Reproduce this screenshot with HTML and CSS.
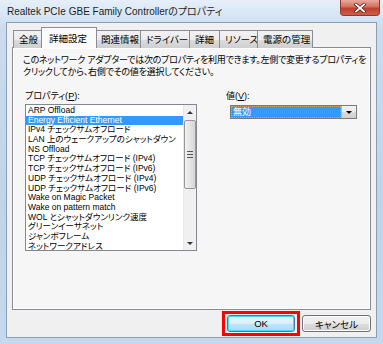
FILE: index.html
```html
<!DOCTYPE html>
<html lang="ja">
<head>
    <meta charset="UTF-8">
    <title>Realtek PCIe GBE Family Controllerのプロパティ</title>
    <link rel="stylesheet" href="styles.css">
</head>
<body>
    <div class="window">
        <div class="titlebar">
            <span class="title">Realtek PCIe GBE Family Controllerのプロパティ</span>
            <span class="close">
                <svg width="14" height="10" viewBox="0 0 14 10">
                    <path d="M3 1.5 L11 8.5 M11 1.5 L3 8.5" stroke="#5a1a14" stroke-width="3.2" stroke-linecap="square"/>
                    <path d="M3 1.5 L11 8.5 M11 1.5 L3 8.5" stroke="#fff" stroke-width="1.8" stroke-linecap="square"/>
                </svg>
            </span>
        </div>

        <div class="client">
            <div class="tabs">
                <span class="tab t1">全般</span>
                <span class="tab active">詳細設定</span>
                <span class="tab t3">関連情報</span>
                <span class="tab t4">ドライバー</span>
                <span class="tab t5">詳細</span>
                <span class="tab t6">リソース</span>
                <span class="tab t7">電源の管理</span>
            </div>

            <div class="panel">
                <p class="desc">このネットワーク アダプターでは次のプロパティを利用できます。左側で変更するプロパティを<br>クリックしてから、右側でその値を選択してください。</p>

                <div class="fields">
                    <div class="col-left">
                        <div class="label">プロパティ(<u>P</u>):</div>
                        <div class="listbox">
                            <ul class="items">
                                <li>ARP Offload</li>
                                <li class="selected">Energy Efficient Ethernet</li>
                                <li>IPv4 チェックサムオフロード</li>
                                <li>LAN 上のウェークアップのシャットダウン</li>
                                <li>NS Offload</li>
                                <li>TCP チェックサムオフロード (IPv4)</li>
                                <li>TCP チェックサムオフロード (IPv6)</li>
                                <li>UDP チェックサムオフロード (IPv4)</li>
                                <li>UDP チェックサムオフロード (IPv6)</li>
                                <li>Wake on Magic Packet</li>
                                <li>Wake on pattern match</li>
                                <li>WOL とシャットダウンリンク速度</li>
                                <li>グリーンイーサネット</li>
                                <li>ジャンボフレーム</li>
                                <li>ネットワークアドレス</li>
                            </ul>
                            <div class="scrollbar">
                                <span class="arrow up"></span>
                                <span class="thumb"><span class="grip"></span></span>
                                <span class="track"></span>
                                <span class="arrow down"></span>
                            </div>
                        </div>
                    </div>

                    <div class="col-right">
                        <div class="label">値(<u>V</u>):</div>
                        <div class="select">
                            <span class="value">無効</span>
                            <span class="drop"></span>
                        </div>
                    </div>
                </div>
            </div>

            <div class="buttons">
                <span class="mark"><button class="btn default">OK</button></span>
                <button class="btn">キャンセル</button>
            </div>
        </div>
    </div>
</body>
</html>
```

FILE: styles.css
```css
* {
    box-sizing: border-box;
}
body {
    margin: 0;
    font-family: "Liberation Sans", "Noto Sans CJK JP", sans-serif;
    font-feature-settings: "palt";
    color: #000;
}
.window {
    width: 383px;
    height: 344px;
    display: flex;
    flex-direction: column;
    background: linear-gradient(#e6eff9, #c9dcf0 30px, #bed4eb 60%, #c5d9ee);
}
.titlebar {
    height: 22px;
    display: flex;
    justify-content: space-between;
    align-items: flex-start;
    padding-left: 7px;
    flex-shrink: 0;
}
.title {
    font-size: 10px;
    line-height: 12px;
    padding-top: 6px;
    color: #1e1e1e;
}
.close {
    width: 40px;
    height: 16px;
    margin-right: 3px;
    display: flex;
    align-items: center;
    justify-content: center;
    background: linear-gradient(#e9a99c, #d0705f 45%, #c23d2d 55%, #cf5e48);
    border: 1px solid #8a3a30;
    border-top: none;
    border-radius: 0 0 4px 4px;
}
.client {
    flex: 1;
    margin: 0 6px 6px;
    border: 1px solid #8d9db2;
    background: #f0f0f0;
    padding: 4px 5px 1px;
    display: flex;
    flex-direction: column;
}

/* tabs */
.tabs {
    display: flex;
    align-items: flex-end;
    height: 21px;
    padding-left: 1px;
    position: relative;
    z-index: 1;
    margin-bottom: -1px;
}
.tab {
    height: 18px;
    font-size: 9.5px;
    line-height: 17px;
    padding: 0 5px;
    border: 1px solid #898c95;
    border-bottom: none;
    margin-right: -1px;
    background: linear-gradient(#f2f2f2, #ebebeb 50%, #dddddd 51%, #cfcfcf);
    white-space: nowrap;
}
.tab.t1 { width: 31px; }
.tab.t3 { width: 46px; }
.tab.t4 { width: 50px; }
.tab.t5 { width: 31px; }
.tab.t6 { width: 39px; }
.tab.t7 { width: 56px; }
.tab.active {
    height: 21px;
    width: 56px;
    margin: 0 -2px 0 -2px;
    padding: 2px 7px 0;
    background: #fbfbfb;
    position: relative;
    z-index: 2;
}

.panel {
    height: 263px;
    border: 1px solid #898c95;
    background: #f6f6f6;
    box-shadow: inset 1px 1px 0 #fff, inset -1px -1px 0 #fff;
    padding: 6px 10px 0 10px;
}
.desc {
    margin: 0;
    font-size: 9px;
    line-height: 12px;
    letter-spacing: -0.25px;
    white-space: nowrap;
}
.fields {
    display: flex;
    margin-top: 12px;
}
.label {
    font-size: 9px;
    line-height: 12px;
    height: 14px;
}
.col-left {
    margin-left: 2px;
    width: 172px;
}
.col-right {
    margin-left: 29px;
}

/* property list */
.listbox {
    height: 147px;
    border: 1px solid #828790;
    background: #fff;
    display: flex;
}
.items {
    list-style: none;
    margin: 0;
    padding: 1px 0 0;
    flex: 1;
    overflow: hidden;
}
.items li {
    font-size: 8.5px;
    line-height: 9.7px;
    height: 9.7px;
    padding-left: 2px;
    white-space: nowrap;
}
.items li.selected {
    background: #3399ff;
    color: #fff;
}
.scrollbar {
    width: 13px;
    display: flex;
    flex-direction: column;
    background: #f0f0f0;
    border-left: 1px solid #e8e8e8;
}
.arrow {
    height: 14px;
    display: flex;
    align-items: center;
    justify-content: center;
}
.arrow::before {
    content: "";
    border-left: 3px solid transparent;
    border-right: 3px solid transparent;
}
.arrow.up::before {
    border-bottom: 3px solid #333;
}
.arrow.down::before {
    border-top: 3px solid #333;
}
.thumb {
    height: 69px;
    margin: 1px 0 0;
    border: 1px solid #979797;
    border-radius: 2px;
    background: linear-gradient(90deg, #f2f2f2, #e4e4e4 50%, #d6d6d6);
    display: flex;
    align-items: center;
    justify-content: center;
}
.grip {
    width: 6px;
    height: 7px;
    background: repeating-linear-gradient(#555 0 1px, transparent 1px 3px);
}
.track {
    flex: 1;
}

/* value dropdown */
.select {
    margin: 1px 0 0 4px;
    width: 127px;
    height: 14px;
    border: 1px solid #7a7a7a;
    background: #fff;
    display: flex;
}
.value {
    flex: 1;
    background: #3399ff;
    color: #fff;
    font-size: 9px;
    line-height: 12px;
    padding-left: 2px;
    outline: 1px dotted #c9a36a;
    outline-offset: -1px;
}
.drop {
    width: 15px;
    border-left: 1px solid #b5b5b5;
    background: linear-gradient(#f2f2f2, #ebebeb 50%, #dddddd 51%, #cfcfcf);
    display: flex;
    align-items: center;
    justify-content: center;
}
.drop::before {
    content: "";
    border-left: 3px solid transparent;
    border-right: 3px solid transparent;
    border-top: 3px solid #000;
}

/* buttons */
.buttons {
    display: flex;
    justify-content: flex-end;
    align-items: center;
    gap: 2px;
    margin-top: 1px;
}
.mark {
    border: 3px solid #ff0000;
    padding: 1px 2px;
    display: flex;
}
.btn {
    width: 68px;
    height: 17px;
    padding: 0;
    font-family: "Liberation Sans", "Noto Sans CJK JP", sans-serif;
    font-feature-settings: "palt";
    font-size: 9.5px;
    border: 1px solid #707070;
    border-radius: 3px;
    background: linear-gradient(#f2f2f2, #ebebeb 50%, #dddddd 51%, #cfcfcf);
    box-shadow: inset 0 0 0 1px #fcfcfc;
}
.btn.default {
    border-color: #3c7fb1;
    background: linear-gradient(#eaf6fd, #d9f0fc 50%, #bee6fd 51%, #a7d9f5);
    box-shadow: inset 0 0 0 1px #48d8fb;
}
.btn + .btn,
.mark + .btn {
    width: 69px;
}
```
